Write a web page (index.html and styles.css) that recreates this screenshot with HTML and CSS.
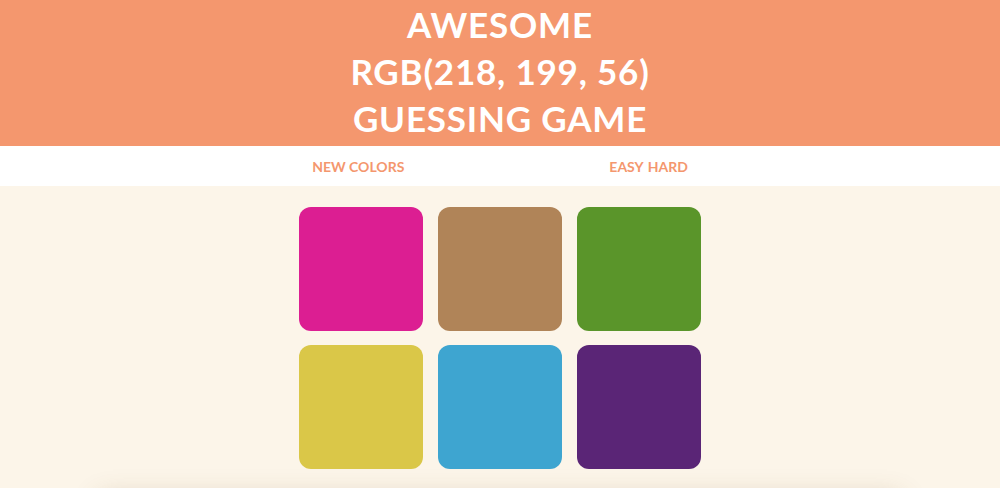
FILE: index.html
```html
<!DOCTYPE html>
<html>
<head>
<meta charset="utf-8">
<link rel="stylesheet" href="styles.css">
</head>
<body>
<header class="header">
  <h1 class="title">Awesome<br>RGB(218, 199, 56)<br>Guessing Game</h1>
</header>
<nav class="bar">
  <button class="btn">New Colors</button>
  <span class="modes">
    <button class="btn">Easy</button>
    <button class="btn">Hard</button>
  </span>
</nav>
<main class="board">
  <div class="grid">
    <div class="square" style="background:#dc1e92"></div>
    <div class="square" style="background:#b08458"></div>
    <div class="square" style="background:#5a952a"></div>
    <div class="square" style="background:#dac748"></div>
    <div class="square" style="background:#3ea5d0"></div>
    <div class="square" style="background:#5a2576"></div>
  </div>
  <div class="card"></div>
</main>
</body>
</html>
```
FILE: styles.css
```css
html, body {
  margin: 0;
  padding: 0;
}
body {
  background: #fcf5e9;
  font-family: Lato, "Open Sans", sans-serif;
  overflow: hidden;
  height: 488px;
}
.header {
  background: #f4976e;
  height: 146px;
  box-sizing: border-box;
  padding-bottom: 4px;
  display: flex;
  align-items: center;
  justify-content: center;
}
.title {
  margin: 0;
  color: #ffffff;
  font-weight: 700;
  font-size: 35px;
  line-height: 47px;
  text-transform: uppercase;
  text-align: center;
  letter-spacing: 0.8px;
}
.bar {
  background: #ffffff;
  height: 40px;
  display: flex;
  align-items: center;
  justify-content: center;
  gap: 205px;
}
.modes {
  display: flex;
  gap: 4px;
}
.btn {
  border: none;
  background: none;
  padding: 0;
  color: #f4976e;
  font-family: Lato, "Open Sans", sans-serif;
  font-weight: 700;
  font-size: 14px;
  text-transform: uppercase;
  cursor: pointer;
}
.board {
  padding-top: 21px;
  display: flex;
  flex-direction: column;
  align-items: center;
}
.grid {
  display: grid;
  grid-template-columns: repeat(3, 124px);
  column-gap: 15px;
  row-gap: 14px;
}
.square {
  width: 124px;
  height: 124px;
  border-radius: 12px;
}
.card {
  margin-top: 30px;
  width: 800px;
  height: 100px;
  background: #fcf5e9;
  box-shadow: 0 0 26px rgba(120, 90, 50, 0.3);
}
```
